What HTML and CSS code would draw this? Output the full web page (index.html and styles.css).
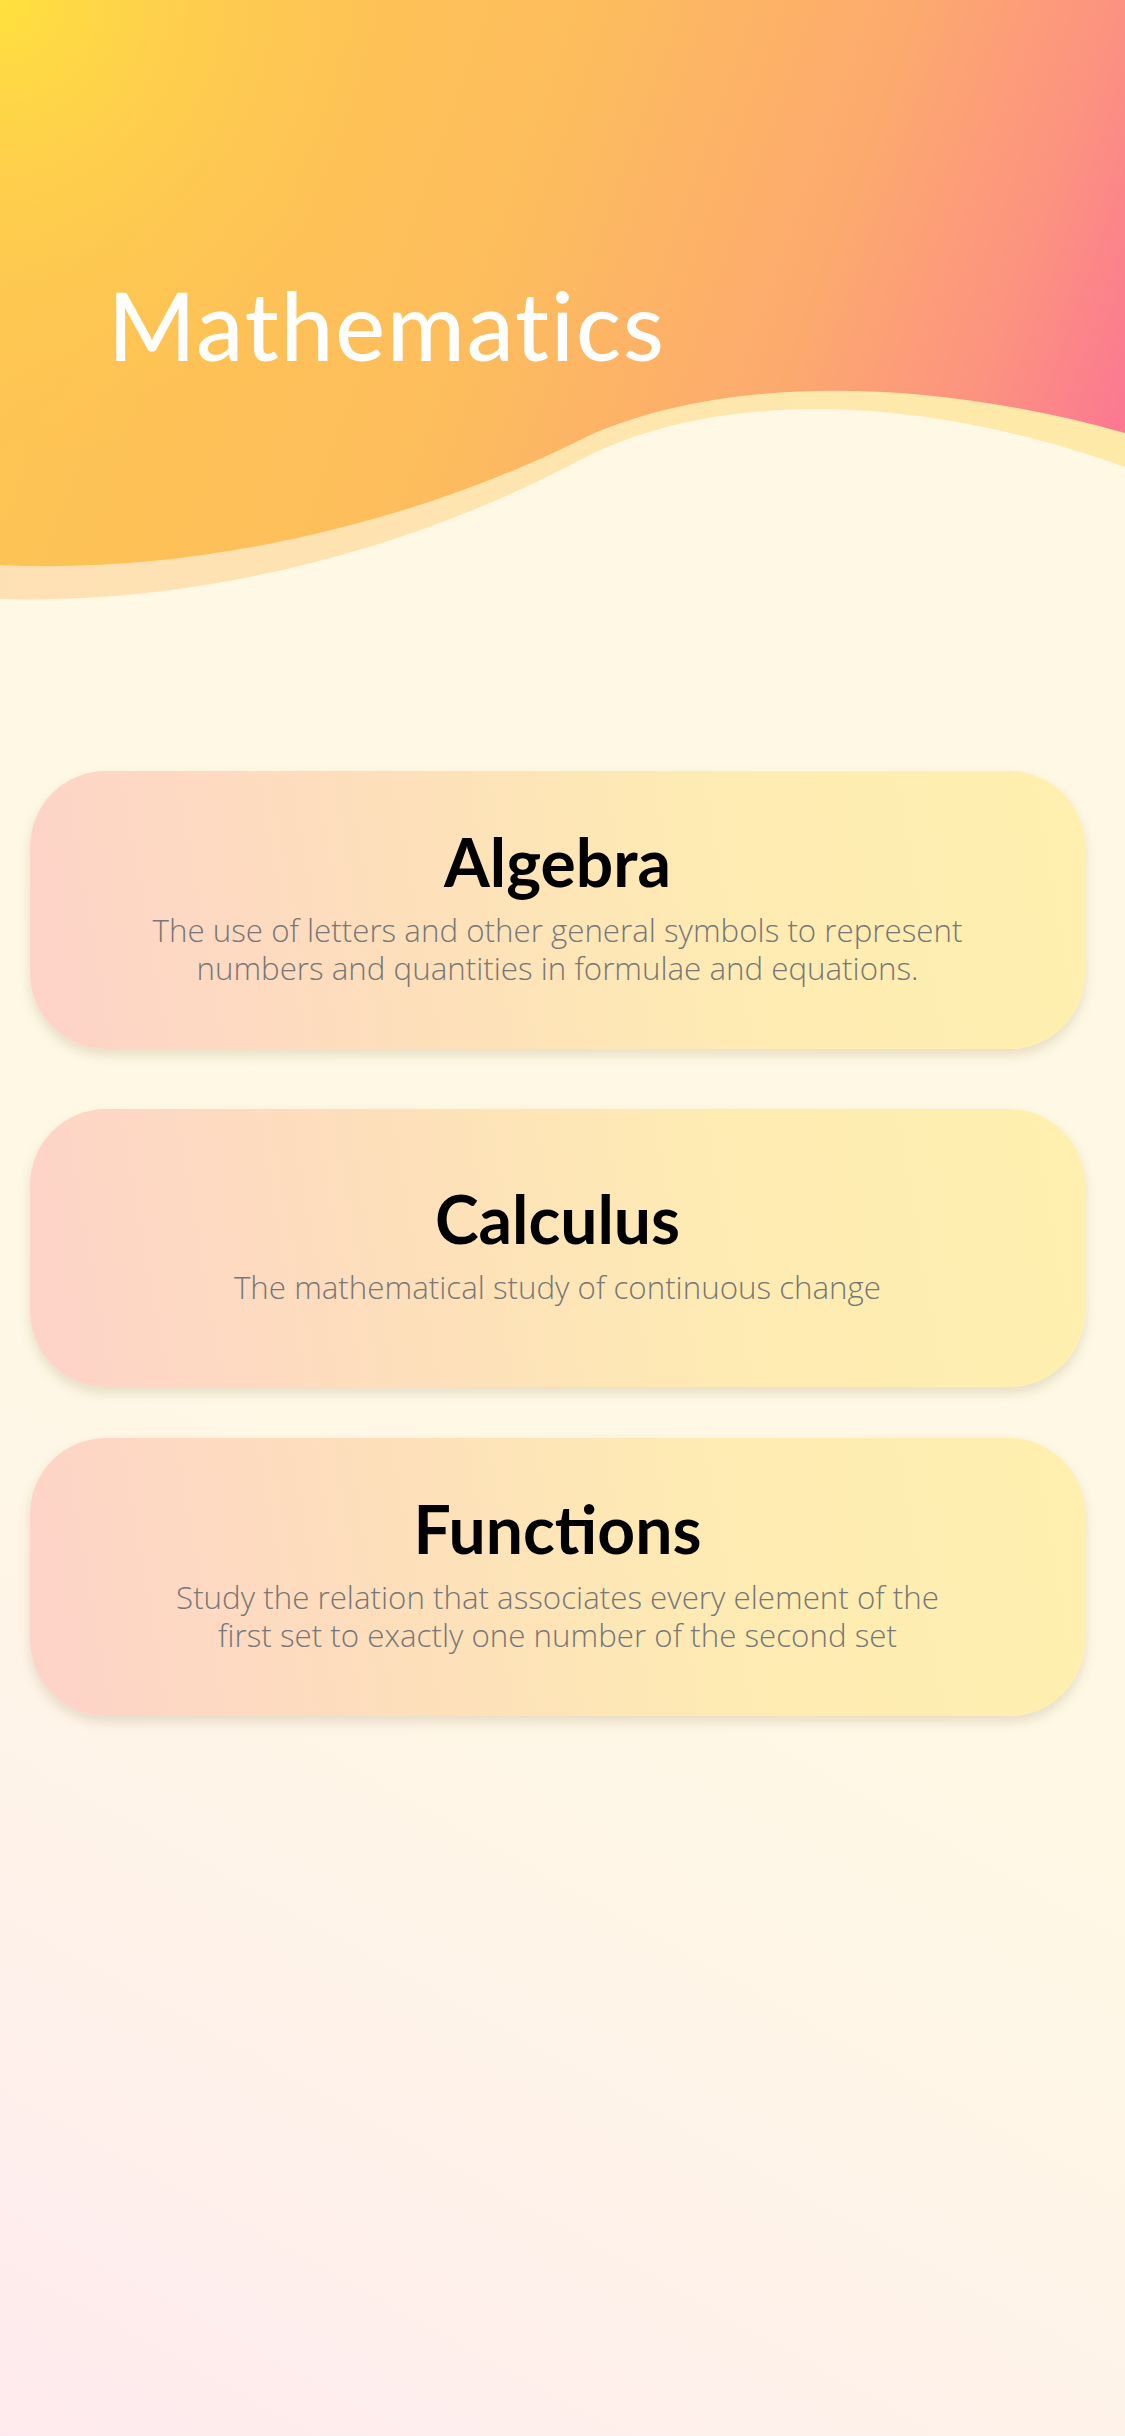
FILE: index.html
```html
<!DOCTYPE html>
<html lang="en">
<head>
<meta charset="utf-8">
<title>Mathematics</title>
<link rel="stylesheet" href="styles.css">
</head>
<body>
<header class="hero">
  <svg class="hero-wave" viewBox="0 0 1125 600" preserveAspectRatio="none" aria-hidden="true">
    <defs>
      <linearGradient id="heroGrad" gradientUnits="userSpaceOnUse" x1="0" y1="0" x2="1125" y2="400">
        <stop offset="0" stop-color="#fec650"/>
        <stop offset="0.45" stop-color="#fdbe5c"/>
        <stop offset="0.72" stop-color="#fcaa6e"/>
        <stop offset="0.88" stop-color="#fc9380"/>
        <stop offset="1" stop-color="#fb7991"/>
      </linearGradient>
      <radialGradient id="heroGlow" gradientUnits="userSpaceOnUse" cx="0" cy="0" r="460">
        <stop offset="0" stop-color="#ffe13e" stop-opacity="1"/>
        <stop offset="0.35" stop-color="#ffd846" stop-opacity="0.6"/>
        <stop offset="1" stop-color="#fec650" stop-opacity="0"/>
      </radialGradient>
      <linearGradient id="bandGrad" gradientUnits="userSpaceOnUse" x1="0" y1="0" x2="1125" y2="0">
        <stop offset="0" stop-color="#fee0b5"/>
        <stop offset="1" stop-color="#feeaa8"/>
      </linearGradient>
    </defs>
    <path fill="url(#bandGrad)" d="M0,0 H1125 V467 C880,380 690,402 580,460 C430,540 220,605 0,599 Z"/>
    <path fill="url(#heroGrad)" d="M0,0 H1125 V433 C900,370 700,382 580,440 C420,520 200,575 0,565 Z"/>
    <path fill="url(#heroGlow)" d="M0,0 H1125 V433 C900,370 700,382 580,440 C420,520 200,575 0,565 Z"/>
  </svg>
  <h1 class="hero-title">Mathematics</h1>
</header>
<main class="topics">
  <section class="card card-algebra">
    <h2 class="card-title">Algebra</h2>
    <p class="card-text">The use of letters and other general symbols to represent numbers and quantities in formulae and equations.</p>
  </section>
  <section class="card card-calculus">
    <h2 class="card-title">Calculus</h2>
    <p class="card-text">The mathematical study of continuous change</p>
  </section>
  <section class="card card-functions">
    <h2 class="card-title">Functions</h2>
    <p class="card-text">Study the relation that associates every element of the first set to exactly one number of the second set</p>
  </section>
</main>
</body>
</html>
```
FILE: styles.css
```css
* { box-sizing: border-box; }

html, body {
  margin: 0;
  padding: 0;
}

body {
  min-height: 2436px;
  font-family: "Lato", "Open Sans", sans-serif;
  background: linear-gradient(29deg, #feeaee 0%, #fef2ea 18%, #fef8e5 38%, #fef9e4 100%);
}

.hero {
  position: relative;
  height: 600px;
}

.hero-wave {
  position: absolute;
  top: 0;
  left: 0;
  width: 100%;
  height: 100%;
  display: block;
}

.hero-title {
  position: relative;
  margin: 0;
  padding: 278px 0 0 108px;
  font-size: 94px;
  line-height: 1;
  font-weight: 500;
  letter-spacing: 2px;
  color: #ffffff;
}

.topics {
  display: flex;
  flex-direction: column;
  padding: 171px 40px 0 30px;
}

.card {
  height: 278px;
  border-radius: 76px;
  display: flex;
  flex-direction: column;
  align-items: center;
  justify-content: center;
  padding: 0 40px 11px;
  text-align: center;
  background: linear-gradient(80deg, #fdd3c9 0%, #fddfbb 35%, #feebb3 65%, #fef0af 100%);
  box-shadow: 0 6px 12px rgba(120, 100, 50, 0.18);
}

.card-calculus {
  margin-top: 60px;
}

.card-functions {
  margin-top: 51px;
}

.card-title {
  margin: 0;
  font-size: 66px;
  line-height: 78px;
  font-weight: 700;
  color: #000000;
}

.card-text {
  max-width: 822px;
  margin: 10px 0 0;
  font-family: "Open Sans", "Lato", sans-serif;
  font-size: 31.3px;
  line-height: 38px;
  font-weight: 300;
  color: #777777;
}
```
